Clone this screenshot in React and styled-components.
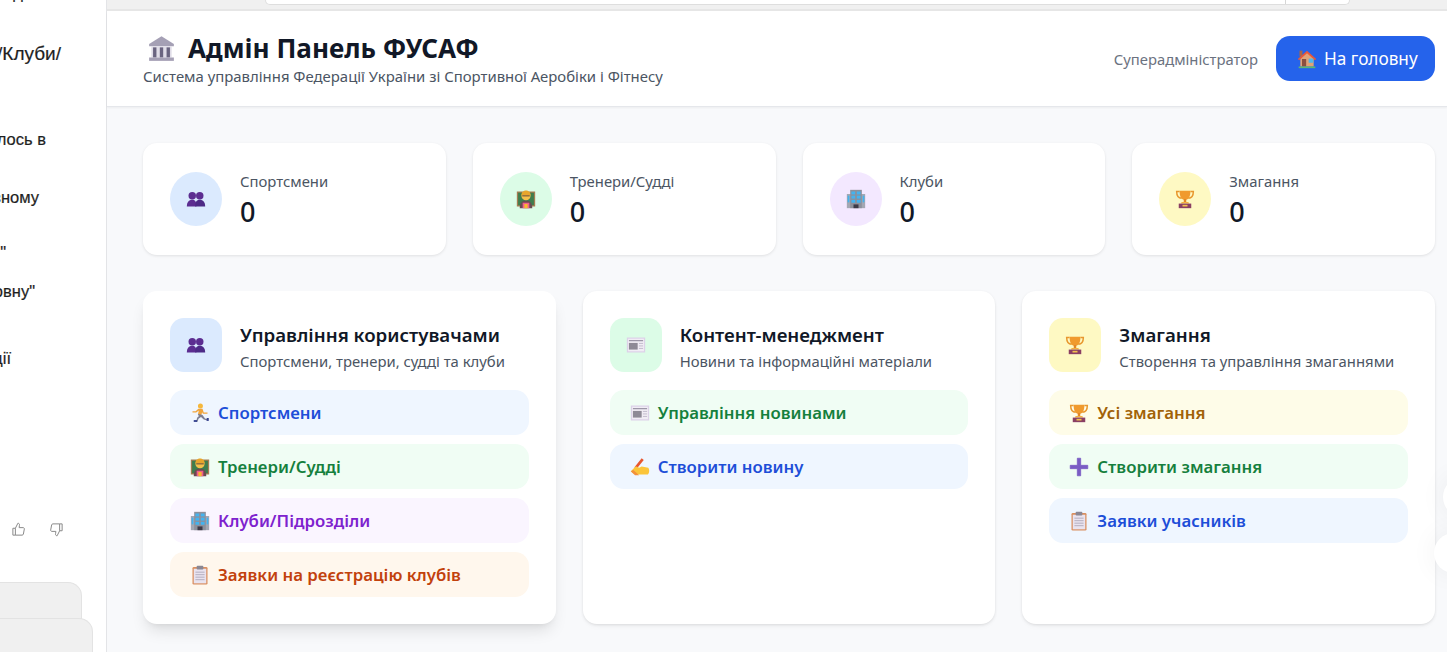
import React from "react";
import styled, { createGlobalStyle } from "styled-components";

const GlobalStyle = createGlobalStyle`
  html, body {
    margin: 0;
    height: 100%;
    overflow: hidden;
    background: #f8f9fb;
  }
  #root {
    height: 100%;
  }
  * {
    box-sizing: border-box;
  }
`;

const People = () => (
  <g fill="#5c2d91">
    <circle cx="7.500" cy="8" r="4.500" />
    <circle cx="16.500" cy="8" r="4.500" />
    <path d="M1 21c0-5 2.500-8 6.500-8s5 3 5 8z" />
    <path d="M11 21c0-5 1.500-8 5.500-8s6.500 3 6.500 8z" fill="#4d2a86" />
  </g>
);

const Teacher = () => (
  <g>
    <rect x="1" y="3" width="22" height="18" fill="#a67c52" />
    <rect x="2.500" y="4.500" width="19" height="15" fill="#3f7d4e" />
    <path d="M4.500 23c0-6 2-9 7.500-9s7.500 3 7.500 9z" fill="#6b4a52" />
    <rect x="8" y="16.500" width="8" height="6.500" fill="#f25f8b" />
    <rect x="10" y="18" width="4" height="5" fill="#f7b731" />
    <circle cx="12" cy="8" r="5.500" fill="#f5c04a" />
    <path d="M6.500 7.500C6.500 0 17.500 0 17.500 7.500z" fill="#e8a52c" />
    <rect x="7.500" y="7.500" width="9" height="1.400" fill="#7a5a3a" />
  </g>
);

const Office = () => (
  <g>
    <rect x="1" y="6" width="22" height="17" fill="#a3a7b3" />
    <rect x="5" y="1" width="14" height="22" fill="#8c909c" />
    <g fill="#43b3f0">
      <rect x="6.500" y="3" width="4.500" height="3.500" />
      <rect x="13" y="3" width="4.500" height="3.500" />
      <rect x="6.500" y="8" width="4.500" height="3.500" />
      <rect x="13" y="8" width="4.500" height="3.500" />
      <rect x="6.500" y="13" width="4.500" height="3.500" />
      <rect x="13" y="13" width="4.500" height="3.500" />
      <rect x="2" y="8" width="2" height="8" />
      <rect x="20" y="8" width="2" height="8" />
    </g>
    <rect x="9" y="18.500" width="6" height="4.500" fill="#3d3a48" />
  </g>
);

const Trophy = () => (
  <g>
    <path d="M5.500 3H2c0 5 2 8 6 8M18.500 3H22c0 5-2 8-6 8" fill="none" stroke="#e8972e" strokeWidth="1.800" />
    <path d="M5.500 2h13c0 7-2 11-6.500 11S5.500 9 5.500 2z" fill="#f09a2e" />
    <rect x="10.500" y="12" width="3" height="4" fill="#e2852a" />
    <path d="M8 15.500h8l1 2H7z" fill="#f4b13f" />
    <rect x="4.500" y="17.500" width="15" height="5.500" fill="#8a3f63" />
    <rect x="9" y="19" width="6" height="2" fill="#f4c04e" />
  </g>
);

const Newspaper = () => (
  <g>
    <rect x="1" y="3" width="22" height="18" fill="#dcd2e8" />
    <rect x="2.500" y="4.500" width="19" height="15" fill="#f1edf5" />
    <rect x="3.500" y="6" width="17" height="1.500" fill="#9d97a8" />
    <rect x="3.500" y="9.500" width="10.500" height="8" fill="#8e8a96" />
    <g fill="#c3bccd">
      <rect x="15.500" y="9.500" width="5" height="1.200" />
      <rect x="15.500" y="12.500" width="5" height="1.200" />
      <rect x="15.500" y="15.500" width="5" height="1.200" />
    </g>
  </g>
);

const Runner = () => (
  <g>
    <circle cx="12.500" cy="3.500" r="3" fill="#f5b83d" />
    <path d="M10 7h5l1.500 4.500H21v1.500h-5.500l-1-2-1 4-4-1 1-5-3 2.500H3v-1.500h3.800z" fill="#f2a53a" />
    <path d="M9.500 13l5.500 1.500 3 4 3 1-.5 1.500-4-1.200-3.300-3-3 2.200-1.200 3.500H7.500l1-4.800 2-1.700z" fill="#7d7f92" />
    <rect x="4.500" y="20.500" width="4" height="2.200" fill="#33408f" />
    <rect x="20" y="18" width="2.500" height="3.500" fill="#33408f" />
  </g>
);

const Clipboard = () => (
  <g>
    <rect x="3" y="2.500" width="18" height="21" rx="1.500" fill="#d98e5f" />
    <rect x="4.500" y="4.500" width="15" height="17.500" fill="#e9e3ef" />
    <rect x="8" y="1" width="8" height="4.500" rx="1" fill="#8a8794" />
    <g fill="#b5afc0">
      <rect x="6.500" y="8" width="11" height="1.200" />
      <rect x="6.500" y="11" width="11" height="1.200" />
      <rect x="6.500" y="14" width="11" height="1.200" />
      <rect x="6.500" y="17" width="11" height="1.200" />
    </g>
  </g>
);

const WritingHand = () => (
  <g>
    <path d="M14 1.500l2.500 2L8 14l-3 1 .8-3.200z" fill="#e8572f" />
    <path d="M1 17l6-6 4 2 3-1.500 8 1.500c1.500 2 1.500 6-.5 8H10c-3.500 0-7-1.500-9-4z" fill="#fbc53a" />
    <path d="M1 17l5 5 5 0-7-6.500z" fill="#f2913c" />
  </g>
);

const House = () => (
  <g>
    <rect x="3" y="2" width="3.500" height="7" fill="#a8664a" />
    <path d="M4 11L12 4l8 7v10H4z" fill="#e0a377" />
    <path d="M1 12L12 2l11 10-1.500 1.500L12 5 2.500 13.500z" fill="#e8583a" />
    <rect x="6" y="12" width="5" height="9" fill="#8a4f3f" />
    <rect x="14" y="11.500" width="5.500" height="5" fill="#4fb8ec" />
    <rect x="2" y="21" width="20" height="2" fill="#5cb974" />
  </g>
);

const Bank = () => (
  <g>
    <path d="M12 1l11 7v2H1V8z" fill="#a5a0b5" />
    <rect x="3" y="10" width="18" height="10" fill="#e0dde8" />
    <g fill="#6a6480">
      <rect x="4.500" y="11" width="3" height="9" />
      <rect x="10.500" y="11" width="3" height="9" />
      <rect x="16.500" y="11" width="3" height="9" />
    </g>
    <rect x="1" y="20" width="22" height="3" fill="#a5a0b5" />
  </g>
);

const Plus = () => <path d="M10 1.500h4V10h8.500v4H14v8.500h-4V14H1.500v-4H10z" fill="#7a5cc4" strokeLinejoin="round" stroke="#7a5cc4" strokeWidth="1" />;

const glyphs = {
  people: People,
  teacher: Teacher,
  office: Office,
  trophy: Trophy,
  news: Newspaper,
  runner: Runner,
  clipboard: Clipboard,
  writing: WritingHand,
  house: House,
  bank: Bank,
  plus: Plus,
};

const EmojiSvg = styled.svg`
  flex: none;
`;

const Emoji = ({ name, size }) => {
  const Glyph = glyphs[name];
  return (
    <EmojiSvg width={size} height={size} viewBox="0 0 24 24">
      <Glyph />
    </EmojiSvg>
  );
};

const Page = styled.div`
  display: flex;
  height: 652px;
  overflow: hidden;
  position: relative;
  font-family: "Noto Sans", "Open Sans", sans-serif;
`;

const Sidebar = styled.aside`
  width: 107px;
  flex: none;
  background: #ffffff;
  border-right: 1px solid #e3e4e7;
  display: flex;
  flex-direction: column;
  overflow: hidden;
  font-family: "Liberation Sans", Arial, sans-serif;
  font-weight: 500;
  color: #1f1f1f;
`;

const SideText = styled.div`
  height: 26px;
  margin-top: ${(p) => p.$top}px;
  padding-right: ${(p) => p.$right}px;
  display: flex;
  justify-content: flex-end;
  white-space: nowrap;
  font-size: ${(p) => p.$size || 16.5}px;
  line-height: 26px;
  -webkit-text-stroke: 0.2px #1f1f1f;
`;

const FeedbackRow = styled.div`
  display: flex;
  gap: 23px;
  padding-left: 11px;
  margin-top: 151px;
  color: #8a8a8a;
`;

const Composer = styled.div`
  height: 46px;
  flex: none;
  width: ${(p) => p.$width}px;
  margin-top: ${(p) => p.$top}px;
  background: #f0f0f0;
  border: 1px solid #e3e3e3;
  border-left: 0;
  border-radius: 0 14px 0 0;
`;

const Main = styled.main`
  flex: 1;
  display: flex;
  flex-direction: column;
  min-width: 0;
`;

const TopStrip = styled.div`
  height: 11px;
  flex: none;
  background: #f0f0f0;
  border-bottom: 2px solid #e6e6e6;
  padding-left: 158px;
  padding-right: 97px;
`;

const AddressBar = styled.div`
  height: 5px;
  background: #ffffff;
  border: 1px solid #dedede;
  border-top: 0;
  border-radius: 0 0 12px 12px;
  display: flex;
  justify-content: flex-end;
  padding-right: 63px;
  &::after {
    content: "";
    width: 1px;
    background: #d6d6d6;
  }
`;

const Header = styled.header`
  height: 96px;
  flex: none;
  background: #ffffff;
  border-bottom: 1px solid #e5e7eb;
  box-shadow: 0 1px 2px rgba(0, 0, 0, 0.05);
  padding: 0 12px 0 36px;
  display: flex;
  align-items: center;
  justify-content: space-between;
`;

const TitleBlock = styled.div`
  display: flex;
  flex-direction: column;
`;

const Title = styled.h1`
  margin: 0;
  display: flex;
  align-items: center;
  gap: 13px;
  padding-left: 5px;
  font-size: 26.1px;
  line-height: 34px;
  font-weight: 700;
  color: #111827;
`;

const Subtitle = styled.p`
  margin: 1px 0 0;
  font-size: 14.9px;
  line-height: 20px;
  color: #4b5563;
`;

const HeaderRight = styled.div`
  display: flex;
  align-items: center;
  gap: 18px;
`;

const Role = styled.span`
  font-size: 14.8px;
  color: #6b7280;
`;

const HomeButton = styled.a`
  height: 45px;
  width: 159px;
  padding-left: 21px;
  display: flex;
  align-items: center;
  gap: 7px;
  background: #2563eb;
  color: #ffffff;
  border-radius: 14px;
  font-size: 17.2px;
`;

const Content = styled.div`
  flex: 1;
  padding: 36px 12px 0 36px;
  display: flex;
  flex-direction: column;
  gap: 36px;
`;

const StatsGrid = styled.div`
  display: grid;
  grid-template-columns: repeat(4, 1fr);
  gap: 27px;
`;

const StatCard = styled.div`
  height: 112px;
  background: #ffffff;
  border-radius: 14px;
  padding: 0 27px;
  display: flex;
  align-items: center;
  gap: 18px;
  box-shadow: 0 1px 3px rgba(0, 0, 0, 0.1);
`;

const StatCircle = styled.div`
  width: 52px;
  height: 54px;
  border-radius: 50%;
  flex: none;
  background: ${(p) => p.$bg};
  display: flex;
  align-items: center;
  justify-content: center;
`;

const StatText = styled.div`
  align-self: flex-start;
  padding-top: 28px;
`;

const StatLabel = styled.div`
  font-size: 14.85px;
  line-height: 20px;
  color: #4b5563;
`;

const StatValue = styled.div`
  margin-top: 4px;
  font-size: 27px;
  line-height: 34px;
  font-weight: 500;
  color: #111827;
`;

const ActionsGrid = styled.div`
  display: grid;
  grid-template-columns: repeat(3, 1fr);
  gap: 27px;
`;

const ActionCard = styled.section`
  height: 333px;
  background: #ffffff;
  border-radius: 14px;
  padding: 27px;
  box-shadow: ${(p) =>
    p.$raised
      ? "0 10px 15px -3px rgba(0,0,0,.1), 0 4px 6px -4px rgba(0,0,0,.1)"
      : "0 1px 3px rgba(0,0,0,.1), 0 4px 8px -4px rgba(0,0,0,.06)"};
`;

const CardHead = styled.div`
  display: flex;
  gap: 18px;
  margin-bottom: 18px;
`;

const CardIcon = styled.div`
  width: 52px;
  height: 54px;
  flex: none;
  border-radius: 14px;
  background: ${(p) => p.$bg};
  display: flex;
  align-items: center;
  justify-content: center;
`;

const CardTitle = styled.h2`
  margin: 4px 0 0;
  font-size: 18.7px;
  line-height: 25px;
  font-weight: 600;
  color: #111827;
  white-space: nowrap;
`;

const CardSub = styled.p`
  margin: 4px 0 0;
  font-size: 14.85px;
  line-height: 20px;
  color: #4b5563;
  white-space: nowrap;
`;

const LinkList = styled.div`
  display: flex;
  flex-direction: column;
  gap: 9px;
`;

const ActionLink = styled.a`
  height: 45px;
  border-radius: 14px;
  padding-left: 20px;
  display: flex;
  align-items: center;
  gap: 8px;
  font-size: 16.8px;
  font-weight: 600;
  background: ${(p) => p.$bg};
  color: ${(p) => p.$fg};
`;

const Floating = styled.div`
  position: absolute;
  left: ${(p) => p.$left}px;
  top: ${(p) => p.$top}px;
  width: 40px;
  height: 40px;
  border-radius: 50%;
  background: #ffffff;
  box-shadow: 0 0 28px rgba(0, 0, 0, 0.06);
`;

const tones = {
  blue: { bg: "#eff6ff", fg: "#1d4ed8" },
  green: { bg: "#f0fdf4", fg: "#15803d" },
  purple: { bg: "#faf5ff", fg: "#7e22ce" },
  orange: { bg: "#fff7ed", fg: "#c2410c" },
  yellow: { bg: "#fefce8", fg: "#a16207" },
};

const stats = [
  { label: "Спортсмени", icon: "people", bg: "#dbeafe" },
  { label: "Тренери/Судді", icon: "teacher", bg: "#dcfce7" },
  { label: "Клуби", icon: "office", bg: "#f3e8ff" },
  { label: "Змагання", icon: "trophy", bg: "#fef9c3" },
];

const cards = [
  {
    title: "Управління користувачами",
    sub: "Спортсмени, тренери, судді та клуби",
    icon: "people",
    bg: "#dbeafe",
    raised: true,
    links: [
      { text: "Спортсмени", icon: "runner", tone: "blue" },
      { text: "Тренери/Судді", icon: "teacher", tone: "green" },
      { text: "Клуби/Підрозділи", icon: "office", tone: "purple" },
      { text: "Заявки на реєстрацію клубів", icon: "clipboard", tone: "orange" },
    ],
  },
  {
    title: "Контент-менеджмент",
    sub: "Новини та інформаційні матеріали",
    icon: "news",
    bg: "#dcfce7",
    links: [
      { text: "Управління новинами", icon: "news", tone: "green" },
      { text: "Створити новину", icon: "writing", tone: "blue" },
    ],
  },
  {
    title: "Змагання",
    sub: "Створення та управління змаганнями",
    icon: "trophy",
    bg: "#fef9c3",
    links: [
      { text: "Усі змагання", icon: "trophy", tone: "yellow" },
      { text: "Створити змагання", icon: "plus", tone: "green" },
      { text: "Заявки учасників", icon: "clipboard", tone: "blue" },
    ],
  },
];

// the chat column is cut by the window edge, so each line keeps only its tail
const sideLines = [
  { text: "Вид", top: -20, right: 83 },
  { text: "/Клуби/", top: 35, right: 45, size: 19 },
  { text: "Доводилось в", top: 59, right: 60 },
  { text: "головному", top: 32, right: 67 },
  { text: "\"Судді\"", top: 29, right: 100 },
  { text: "\"На головну\"", top: 13, right: 71 },
  { text: "федерації", top: 41, right: 95 },
];

const App = () => {
  return (
    <Page>
      <GlobalStyle />
      <Sidebar>
        {sideLines.map((line) => (
          <SideText key={line.text} $top={line.top} $right={line.right} $size={line.size}>
            {line.text}
          </SideText>
        ))}
        <FeedbackRow>
          <svg width="15" height="15" viewBox="0 0 24 24" fill="none" stroke="currentColor" strokeWidth="1.600">
            <path d="M7 10v11H3V10zM7 10l4-8c2 0 3 1.500 2.500 3.500L13 9h6.500c1.300 0 2 1 1.800 2.300l-1.500 8c-.2 1-1 1.700-2 1.700H7" />
          </svg>
          <svg width="15" height="15" viewBox="0 0 24 24" fill="none" stroke="currentColor" strokeWidth="1.600">
            <path d="M17 14V3h4v11zM17 14l-4 8c-2 0-3-1.500-2.500-3.500L11 15H4.500c-1.300 0-2-1-1.800-2.300l1.500-8c.2-1 1-1.700 2-1.700H17" />
          </svg>
        </FeedbackRow>
        <Composer $width={82} $top={45} />
        <Composer $width={93} $top={-10} />
      </Sidebar>
      <Main>
        <TopStrip>
          <AddressBar />
        </TopStrip>
        <Header>
          <TitleBlock>
            <Title>
              <Emoji name="bank" size={27} />
              Адмін Панель ФУСАФ
            </Title>
            <Subtitle>Система управління Федерації України зі Спортивної Аеробіки і Фітнесу</Subtitle>
          </TitleBlock>
          <HeaderRight>
            <Role>Суперадміністратор</Role>
            <HomeButton>
              <Emoji name="house" size={20} />
              На головну
            </HomeButton>
          </HeaderRight>
        </Header>
        <Content>
          <StatsGrid>
            {stats.map((s) => (
              <StatCard key={s.label}>
                <StatCircle $bg={s.bg}>
                  <Emoji name={s.icon} size={20} />
                </StatCircle>
                <StatText>
                  <StatLabel>{s.label}</StatLabel>
                  <StatValue>0</StatValue>
                </StatText>
              </StatCard>
            ))}
          </StatsGrid>
          <ActionsGrid>
            {cards.map((c) => (
              <ActionCard key={c.title} $raised={c.raised}>
                <CardHead>
                  <CardIcon $bg={c.bg}>
                    <Emoji name={c.icon} size={20} />
                  </CardIcon>
                  <div>
                    <CardTitle>{c.title}</CardTitle>
                    <CardSub>{c.sub}</CardSub>
                  </div>
                </CardHead>
                <LinkList>
                  {c.links.map((l) => (
                    <ActionLink key={l.text} $bg={tones[l.tone].bg} $fg={tones[l.tone].fg}>
                      <Emoji name={l.icon} size={20} />
                      {l.text}
                    </ActionLink>
                  ))}
                </LinkList>
              </ActionCard>
            ))}
          </ActionsGrid>
        </Content>
      </Main>
      <Floating $left={1443} $top={477} />
      <Floating $left={1434} $top={533} />
    </Page>
  );
};

export default App;
